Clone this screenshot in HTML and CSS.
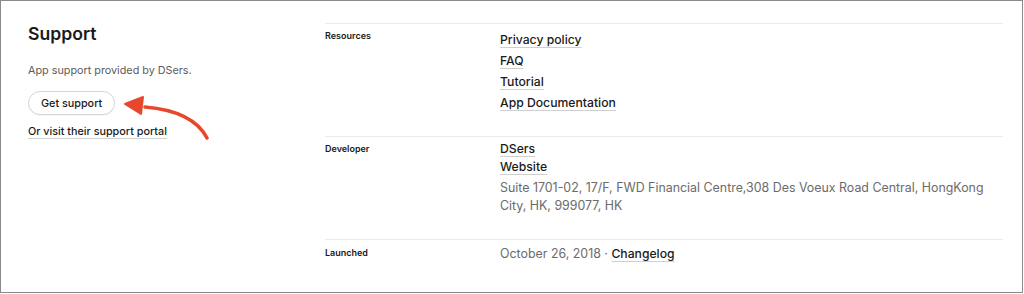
FILE: index.html
```html
<!DOCTYPE html>
<html lang="en">
<head>
<meta charset="utf-8">
<title>Support</title>
<link rel="stylesheet" href="styles.css">
</head>
<body>
<div class="frame">
  <section class="support">
    <h2 class="support-title">Support</h2>
    <p class="support-text">App support provided by DSers.</p>
    <button class="btn" type="button">Get support</button>
    <a class="portal" href="#">Or visit their support portal</a>
    <svg class="arrow" width="110" height="60" viewBox="0 0 110 60" aria-hidden="true">
      <path d="M102 55 Q88 28 40 24" fill="none" stroke="#e8472e" stroke-width="3.6" stroke-linecap="round"/>
      <polygon points="20,21 38,14 36,31" fill="#e8472e" stroke="#e8472e" stroke-width="2" stroke-linejoin="round"/>
    </svg>
  </section>
  <section class="details">
    <div class="row">
      <div class="label">Resources</div>
      <div class="value links">
        <a href="#">Privacy policy</a>
        <a href="#">FAQ</a>
        <a href="#">Tutorial</a>
        <a href="#">App Documentation</a>
      </div>
    </div>
    <div class="row dev">
      <div class="label">Developer</div>
      <div class="value">
        <a class="line" href="#">DSers</a>
        <a class="line" href="#">Website</a>
        <p class="address">Suite 1701-02, 17/F, FWD Financial Centre,308 Des Voeux Road Central, HongKong City, HK, 999077, HK</p>
      </div>
    </div>
    <div class="row launched">
      <div class="label">Launched</div>
      <div class="value"><span class="date">October 26, 2018 · </span><a href="#">Changelog</a></div>
    </div>
  </section>
</div>
</body>
</html>
```
FILE: styles.css
```css
* { box-sizing: border-box; }
html, body { margin: 0; padding: 0; background: #fff; }
body {
  font-family: Inter, "Noto Sans", sans-serif;
  color: #1a1a1a;
}
.frame {
  width: 1023px;
  height: 293px;
  border: 1px solid #8a8a8a;
  padding: 22px 19px 0 27px;
  display: grid;
  grid-template-columns: 297px 1fr;
  overflow: hidden;
}
.support {
  position: relative;
  display: flex;
  flex-direction: column;
  align-items: flex-start;
}
.support-title {
  margin: 0;
  font-size: 17.6px;
  line-height: 22px;
  font-weight: 600;
  color: #1a1a1a;
}
.support-text {
  margin: 18px 0 0;
  font-size: 10.8px;
  line-height: 16px;
  color: #5c5c5c;
}
.btn {
  margin-top: 12px;
  height: 24px;
  padding: 0 12px;
  border: 1px solid #d6d6d6;
  border-radius: 12px;
  background: #fff;
  font-family: inherit;
  font-size: 10.8px;
  font-weight: 500;
  color: #1a1a1a;
  box-shadow: 0 1px 0 rgba(0,0,0,0.04);
}
.portal {
  margin-top: 9px;
  font-size: 10.8px;
  line-height: 16px;
  font-weight: 500;
  color: #1a1a1a;
  text-decoration: underline;
  text-decoration-color: #d0d0d0;
  text-underline-offset: 3px;
}
.arrow {
  position: absolute;
  left: 77px;
  top: 60px;
}
.details { display: flex; flex-direction: column; }
.row {
  display: grid;
  grid-template-columns: 175px 1fr;
  border-top: 1px solid #ebebeb;
  padding: 5px 0 23px;
}
.label {
  font-size: 9px;
  line-height: 14px;
  font-weight: 600;
  color: #1a1a1a;
}
.value a {
  color: #1a1a1a;
  font-size: 12.2px;
  font-weight: 500;
  text-decoration: underline;
  text-decoration-color: #cfcfcf;
  text-decoration-thickness: 1px;
  text-underline-offset: 3px;
}
.links { display: flex; flex-direction: column; align-items: flex-start; }
.links a { line-height: 21px; }
.dev { padding: 3px 0 24px; }
.dev .label { padding-top: 2px; }
.dev .value { display: flex; flex-direction: column; align-items: flex-start; }
.line { line-height: 18px; }
.address {
  margin: 3px 0 0;
  font-size: 12.4px;
  line-height: 18px;
  color: #6b6b6b;
  max-width: 490px;
}
.launched { padding-top: 5px; }
.launched .label { padding-top: 1px; }
.launched .value { line-height: 18px; font-size: 12.4px; }
.date { color: #6b6b6b; }
```
